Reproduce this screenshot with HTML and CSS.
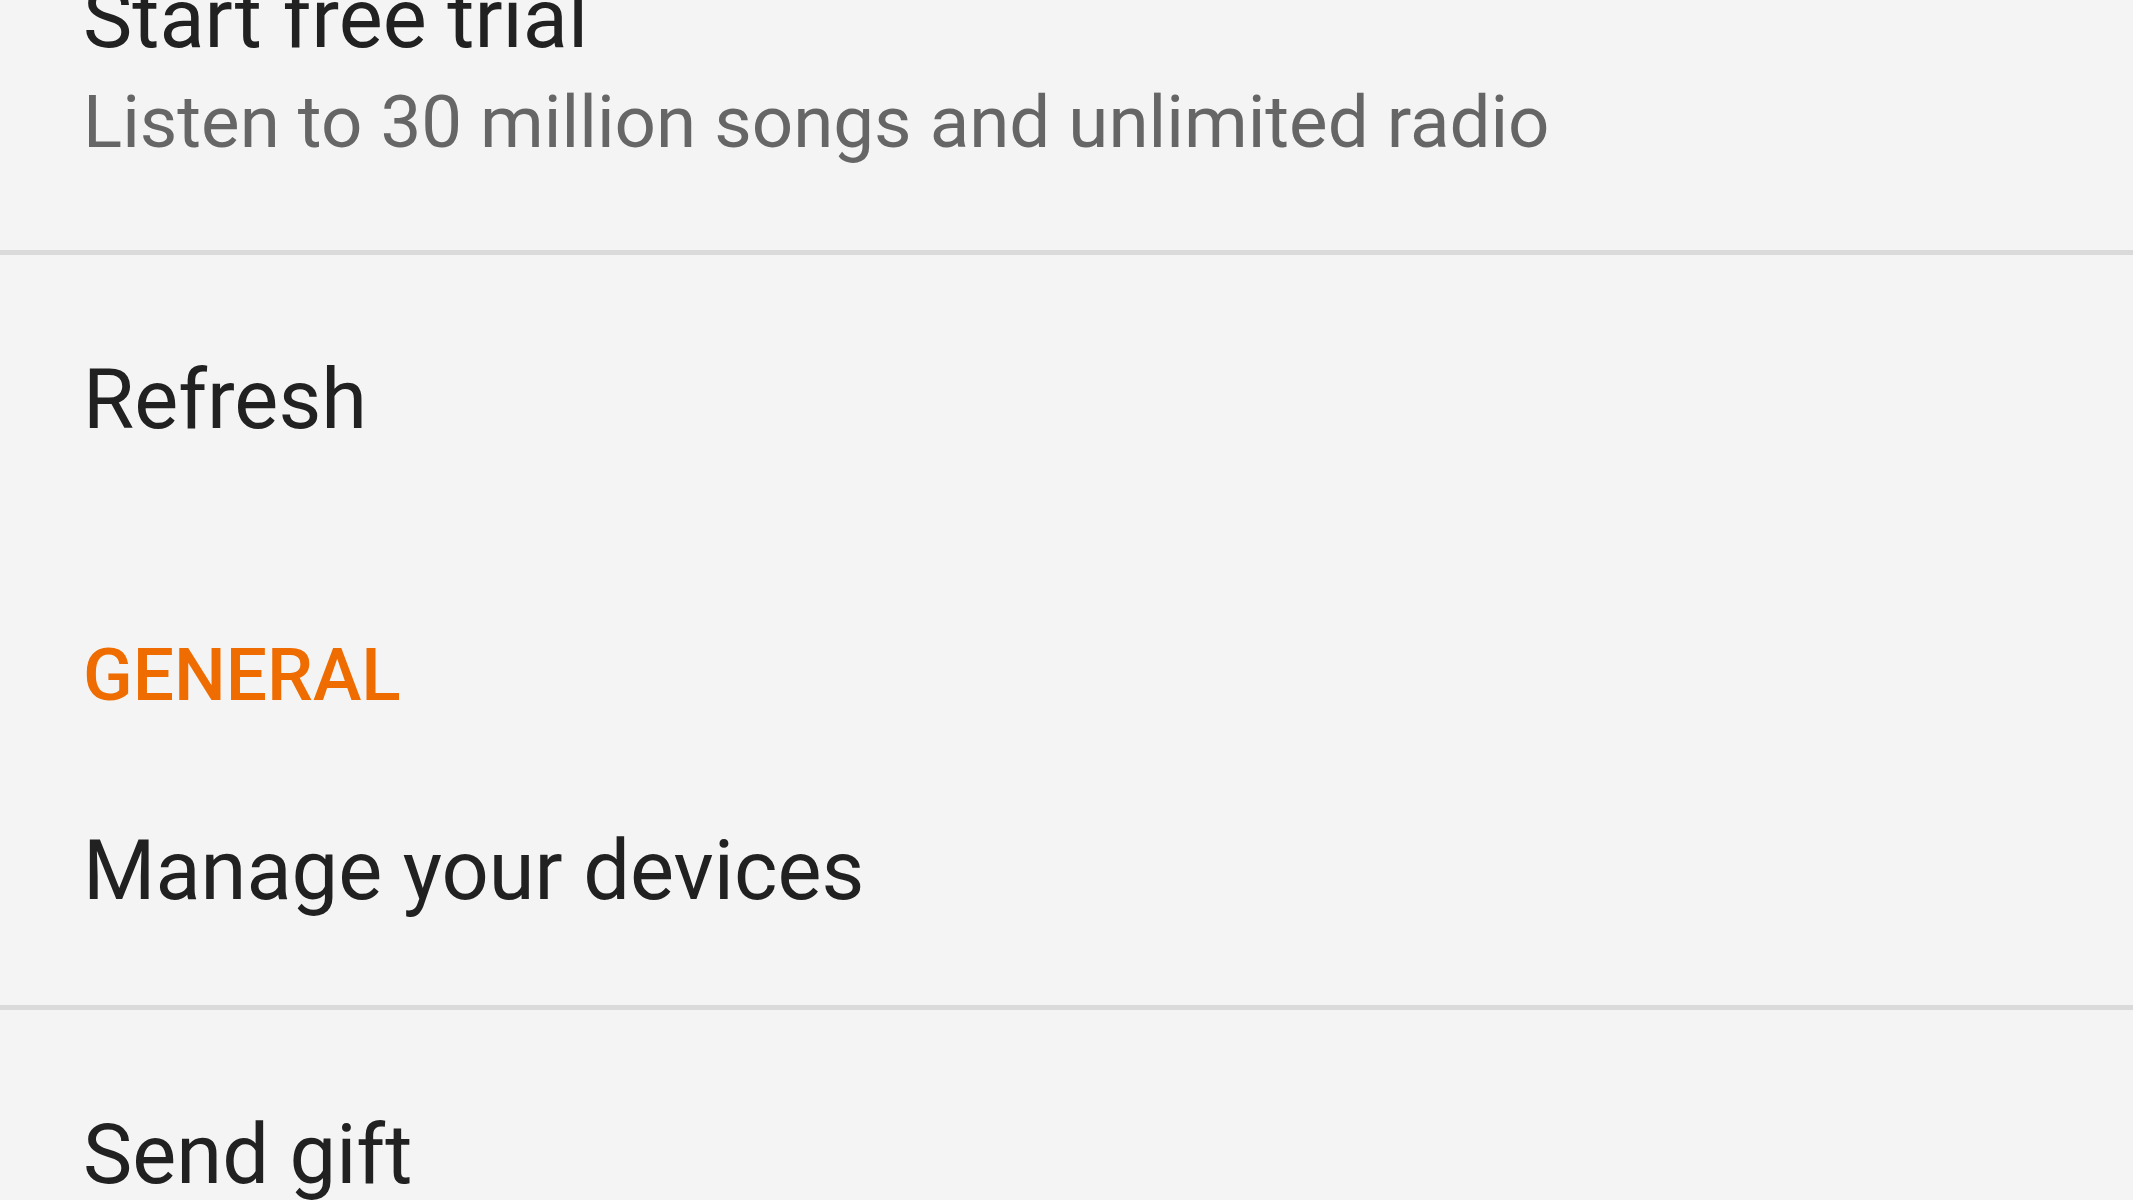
FILE: index.html
```html
<!DOCTYPE html>
<html lang="en">
<head>
    <meta charset="UTF-8">
    <meta name="viewport" content="width=device-width, initial-scale=1.0">
    <title>Settings</title>
    <link rel="stylesheet" href="styles.css">
</head>
<body>

    <div class="settings-list">
        <div class="row row-first divided">
            <div class="row-title">Start free trial</div>
            <div class="row-summary">Listen to 30 million songs and unlimited radio</div>
        </div>
        <div class="row row-single">
            <div class="row-title">Refresh</div>
        </div>

        <div class="section-header">GENERAL</div>

        <div class="row row-after-header divided">
            <div class="row-title">Manage your devices</div>
        </div>
        <div class="row row-single">
            <div class="row-title">Send gift</div>
        </div>
    </div>

</body>
</html>
```

FILE: styles.css
```css
body {
    font-family: Roboto, "Noto Sans", sans-serif;
    margin: 0;
    padding: 0;
    background-color: #f4f4f4;
    overflow: hidden;
}
.settings-list {
    margin-top: -31px;
}
.row {
    padding: 95px 83px 94px;
}
.divided {
    border-bottom: 5px solid #dadada;
}
.row-first {
    padding-top: 0;
    padding-bottom: 84px;
}
.row-after-header {
    padding-top: 85px;
    padding-bottom: 84px;
}
.row-title {
    font-size: 83px;
    line-height: 100px;
    color: #212121;
}
.row-summary {
    margin-top: 11px;
    font-size: 72.7px;
    line-height: 86px;
    color: #666666;
}
.section-header {
    padding: 88px 83px 18px;
    font-size: 73px;
    line-height: 86px;
    font-weight: 500;
    color: #ef6c00;
}
```
